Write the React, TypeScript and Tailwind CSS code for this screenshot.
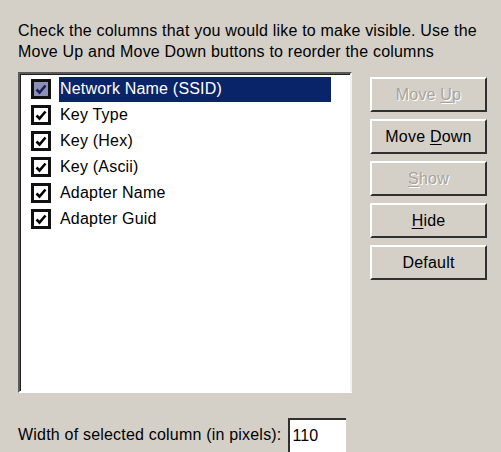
import React from "react";

const items = [
  "Network Name (SSID)",
  "Key Type",
  "Key (Hex)",
  "Key (Ascii)",
  "Adapter Name",
  "Adapter Guid",
];

function Check({ selected }: { selected?: boolean }) {
  return (
    <div
      className={`w-[20px] h-[20px] border-[3px] border-[#111] flex items-center justify-center ${
        selected ? "bg-[#8c90b4]" : "bg-white"
      }`}
    >
      <svg width="12" height="11" viewBox="0 0 12 11">
        <path d="M1.5 5.5 L4.5 8.5 L10.5 1.5" fill="none" stroke={selected ? "#1a1f5a" : "#000"} strokeWidth="2.6" />
      </svg>
    </div>
  );
}

function Btn({ label, u, disabled }: { label: string; u: number; disabled?: boolean }) {
  const has = u >= 0;
  const before = has ? label.slice(0, u) : label;
  const ch = has ? label.slice(u, u + 1) : "";
  const after = has ? label.slice(u + 1) : "";
  return (
    <div className="w-[117px] h-[35px] bg-[#d4d0c8] border-t-2 border-l-2 border-t-white border-l-white border-b-2 border-r-2 border-b-[#303030] border-r-[#303030] flex items-center justify-center">
      <span
        className={`text-[16px] tracking-[0.2px] ${disabled ? "text-[#a8a49c] [text-shadow:1px_1px_0_#fff]" : "text-black"}`}
      >
        {before}
        {has ? <span className="underline underline-offset-2">{ch}</span> : null}
        {after}
      </span>
    </div>
  );
}

export default function App() {
  return (
    <div
      className="w-[501px] h-[452px] overflow-hidden bg-[#d4d0c8] pl-[18px] pt-[20px] text-black"
      style={{ fontFamily: '"Liberation Sans", Arial, sans-serif' }}
    >
      <p className="text-[16px] leading-[21px] tracking-[0.2px]">
        Check the columns that you would like to make visible. Use the
        <br />
        Move Up and Move Down buttons to reorder the columns
      </p>
      <div className="flex mt-[10px]">
        <div className="w-[334px] h-[321px] border-t-2 border-l-2 border-t-[#5a5a5a] border-l-[#5a5a5a] border-b-2 border-r-2 border-b-white border-r-[#f2f2f2] bg-white">
          <div className="h-full border-t border-l border-t-[#202020] border-l-[#202020] pt-[1px] pl-[10px]">
            {items.map((t, i) => (
              <div key={t} className="flex items-center h-[26px]">
                <Check selected={i === 0} />
                <div
                  className={`ml-[8px] h-[25px] flex items-center text-[16px] tracking-[0.2px] pl-[1px] ${
                    i === 0 ? "bg-[#0a246a] text-white w-[272px]" : "text-black"
                  }`}
                >
                  {t}
                </div>
              </div>
            ))}
          </div>
        </div>
        <div className="ml-[18px] pt-[5px] flex flex-col gap-[7px]">
          <Btn label="Move Up" u={5} disabled />
          <Btn label="Move Down" u={5} />
          <Btn label="Show" u={0} disabled />
          <Btn label="Hide" u={0} />
          <Btn label="Default" u={-1} />
        </div>
      </div>
      <div className="flex items-center mt-[25px]">
        <span className="text-[16px] tracking-[0.2px]">Width of selected column (in pixels):</span>
        <div className="ml-[6px] w-[58px] h-[34px] bg-white border-t-2 border-l-2 border-t-[#303030] border-l-[#303030] flex items-center pl-[3px] text-[16px]">
          110
        </div>
      </div>
    </div>
  );
}
